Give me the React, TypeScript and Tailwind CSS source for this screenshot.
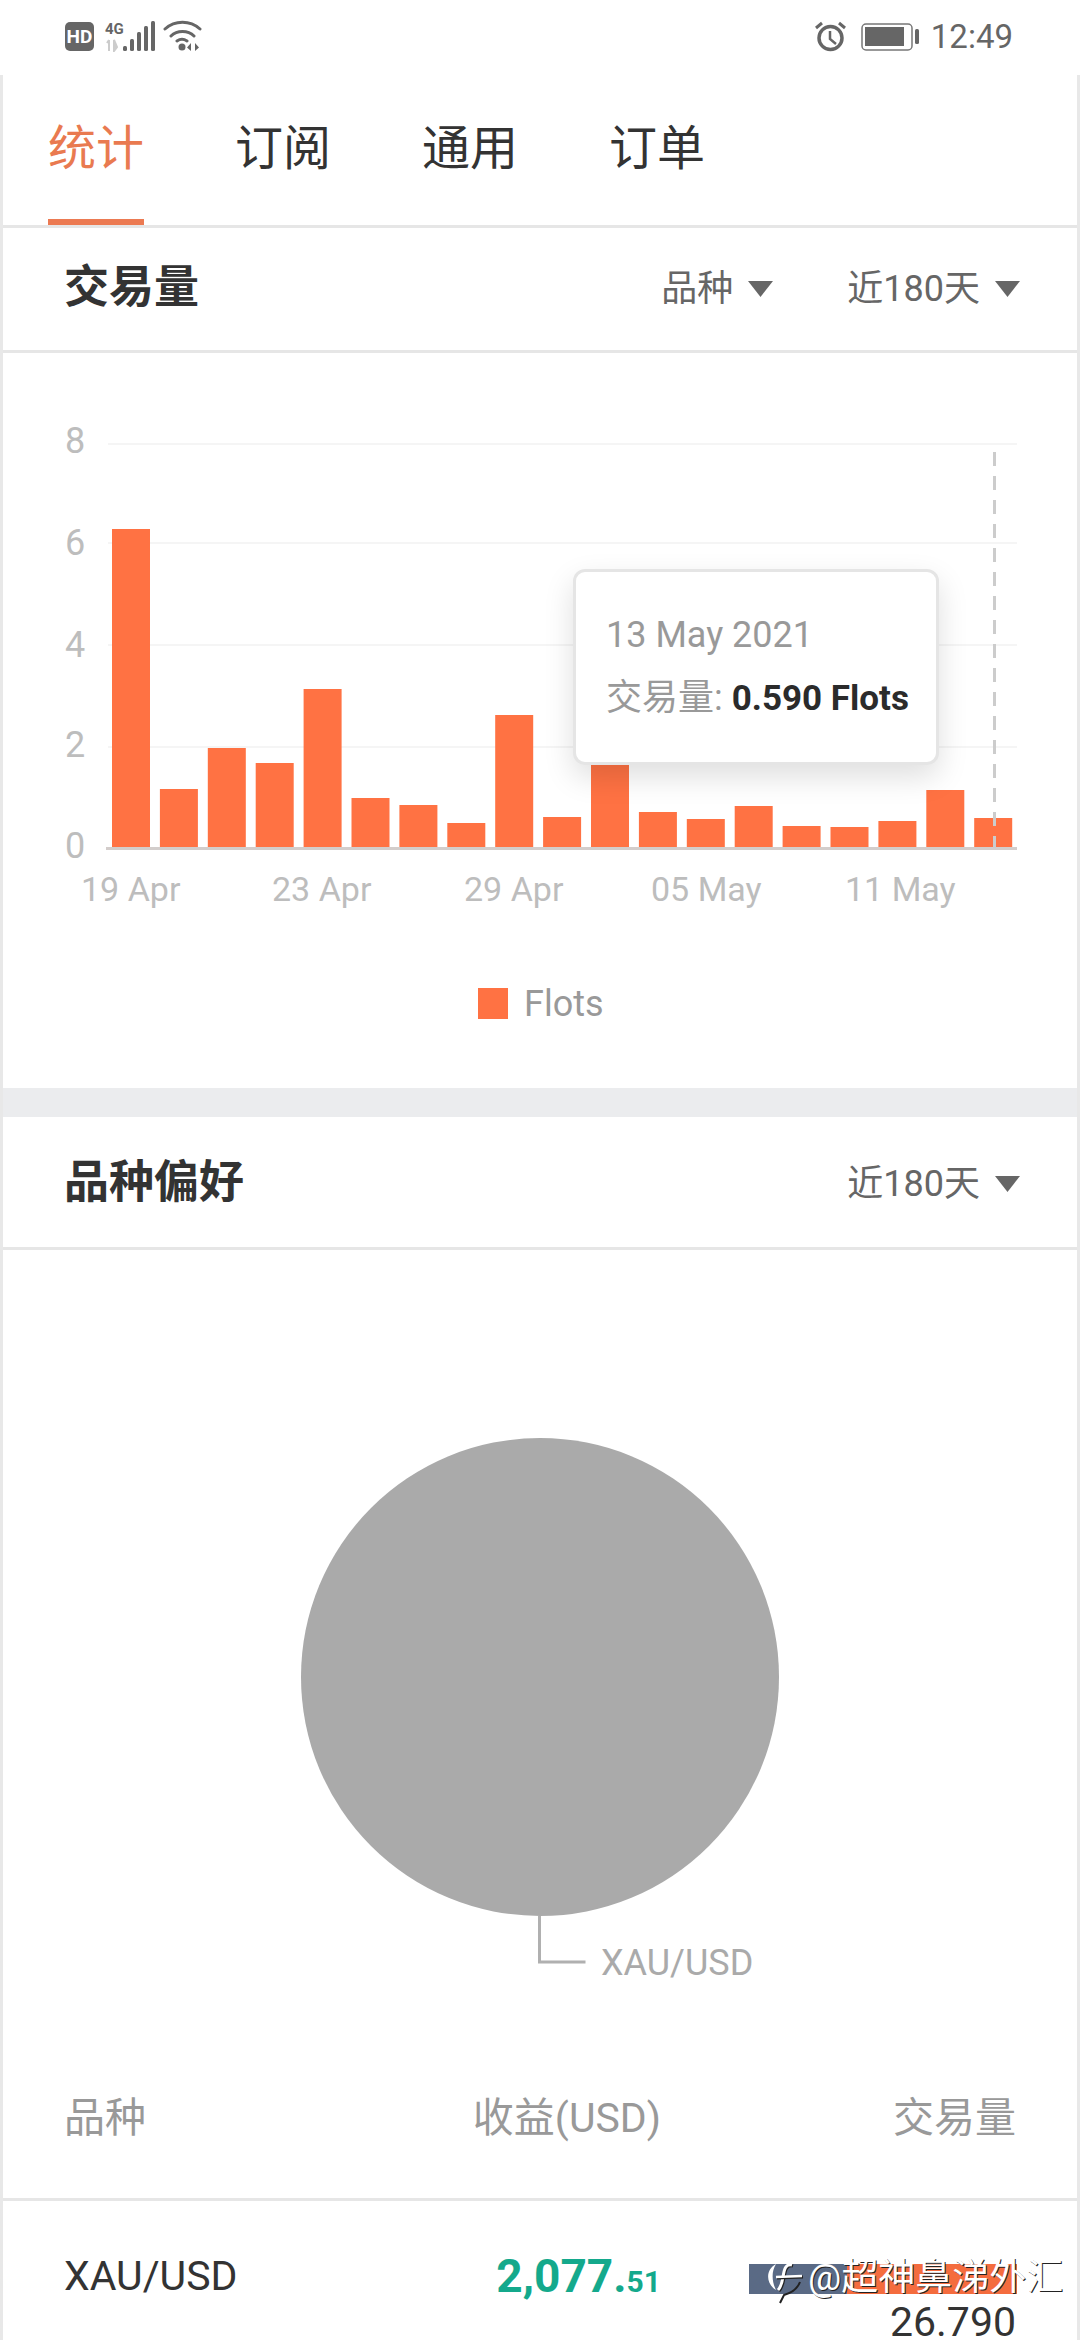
const barTops = [529, 789, 748, 763, 689, 798, 805, 823, 715, 817, 740, 812, 819, 806, 826, 827, 821, 790, 818];
const gridLines = [444, 543, 645, 747];
const yLabels = [
  { label: "8", y: 453 },
  { label: "6", y: 555 },
  { label: "4", y: 657 },
  { label: "2", y: 757 },
  { label: "0", y: 858 },
];
const xLabels = [
  { label: "19 Apr", x: 81 },
  { label: "23 Apr", x: 272 },
  { label: "29 Apr", x: 464 },
  { label: "05 May", x: 651 },
  { label: "11 May", x: 845 },
];

const Caret = () => (
  <svg width="25" height="16" viewBox="0 0 25 16" className="shrink-0">
    <polygon points="0,0 25,0 12.5,16" fill="#666666" />
  </svg>
);

const Filter = ({ label }: { label: string }) => (
  <div className="flex items-center gap-[15px]">
    <span className="text-[36px] leading-none text-[#666]">{label}</span>
    <Caret />
  </div>
);

const StatusLeft = () => (
  <svg width="137" height="32" viewBox="65 21 137 32">
    <rect x="65" y="23" width="29" height="29" rx="5" fill="#666" />
    <text x="79.500" y="44" textAnchor="middle" fontSize="19" fontWeight="700" fill="#fff">
      HD
    </text>
    <text x="105" y="35" fontSize="15" fontWeight="700" fill="#666">
      4G
    </text>
    <path d="M109 41v11M107 44l2-3M114 41v11l3-4z" stroke="#ccc" strokeWidth="2" fill="#ccc" />
    <rect x="123" y="47" width="4" height="5" rx="1.500" fill="#666" />
    <rect x="130" y="40" width="4" height="12" rx="1.500" fill="#666" />
    <rect x="137" y="33" width="4" height="19" rx="1.500" fill="#666" />
    <rect x="144" y="27" width="4" height="25" rx="1.500" fill="#666" />
    <rect x="151" y="22" width="4" height="30" rx="1.500" fill="#666" />
    <path d="M165 30c10-9 25-9 35 0M171 37c6-6 17-6 23 0M177 42c3-2 7-2 10 0" stroke="#666" strokeWidth="3" fill="none" strokeLinecap="round" />
    <circle cx="182" cy="48" r="3.500" fill="#666" />
    <path d="M191 44v8l-4-3.500zM195 44v8l4-3.500z" fill="#666" />
  </svg>
);

const StatusRight = () => (
  <div className="flex items-center">
    <svg width="107" height="32" viewBox="816 21 107 32">
      <circle cx="833.500" cy="39" r="11.500" stroke="#666" strokeWidth="3.500" fill="none" />
      <path d="M833 32v8l6 5" stroke="#666" strokeWidth="2.500" fill="none" />
      <path d="M819 29l6-5M848 29l-6-5" stroke="#666" strokeWidth="3" fill="none" />
      <rect x="865" y="25" width="50" height="26" rx="4" stroke="#777" strokeWidth="1.500" fill="none" />
      <rect x="868" y="28" width="39" height="19" fill="#666" />
      <rect x="918" y="30" width="4" height="15" rx="1.500" fill="#666" />
    </svg>
    <span className="ml-[11px] text-[33px] leading-none text-[#666]">12:49</span>
  </div>
);

const VolumeChart = () => (
  <svg width="1074" height="735" viewBox="3 353 1074 735" className="block">
    {gridLines.map((y) => (
      <rect key={y} x="108" y={y - 1} width="909" height="2" fill="#f5f5f5" />
    ))}
    {barTops.map((top, i) => (
      <rect key={i} x={112 + i * 47.9} y={top} width="38" height={848 - top} fill="#ff7243" />
    ))}
    <rect x="106" y="847" width="911" height="3" fill="#d3cdcb" />
    <line x1="994.500" y1="452" x2="994.500" y2="848" stroke="#cccccc" strokeWidth="3" strokeDasharray="14 10" />
    {yLabels.map((t) => (
      <text key={t.label} x="65" y={t.y} fontSize="36" fill="#bdbdbd">
        {t.label}
      </text>
    ))}
    {xLabels.map((t) => (
      <text key={t.label} x={t.x} y="901" fontSize="34" fill="#bdbdbd">
        {t.label}
      </text>
    ))}
    <rect x="478" y="988" width="30" height="31" fill="#ff7243" />
    <text x="524" y="1016" fontSize="36" fill="#999">
      Flots
    </text>
  </svg>
);

const PieChart = () => (
  <svg width="1074" height="790" viewBox="3 1250 1074 790" className="block">
    <circle cx="540" cy="1677" r="239" fill="#aaaaaa" />
    <path d="M539.500 1916v46h46" stroke="#b0b0b0" strokeWidth="3" fill="none" />
    <text x="601" y="1975" fontSize="36" fill="#aaaaaa">
      XAU/USD
    </text>
  </svg>
);

const Watermark = () => (
  <div className="absolute left-[749px] top-[2245px] h-[70px] w-[325px]">
    <div className="absolute left-0 top-[19px] flex h-[30px] w-[268px]">
      <div className="w-[98px] bg-[#5a6a85]" />
      <div className="w-[170px] bg-[#f46c3e]" />
    </div>
    <svg width="40" height="46" viewBox="0 0 40 46" className="absolute left-[18px] top-[15px]">
      <path d="M33 22C30 30 24 33 17 35L13 43" stroke="#222" strokeWidth="2" fill="none" />
      <path d="M9 4C-2 10 -1 24 9 30C5 22 4 12 9 4Z" fill="#fff" />
      <path d="M26 6C19 4 18 12 17 18C16 24 15 28 12 31" stroke="#222" strokeWidth="3" fill="none" />
      <path d="M25 5C18 3 17 11 16 17C15 23 14 27 11 30" stroke="#fff" strokeWidth="3" fill="none" />
      <path d="M10 18L36 17" stroke="#222" strokeWidth="3" fill="none" />
      <path d="M9 17L35 16" stroke="#fff" strokeWidth="2.500" fill="none" />
    </svg>
    <span className="absolute left-[59px] top-[8px] whitespace-nowrap text-[37px] leading-[50px] text-white [text-shadow:1px_1px_0_#222]">
      @超神鼻涕外汇
    </span>
  </div>
);

const App = () => {
  return (
    <div className="relative h-[2340px] w-[1080px] overflow-hidden bg-white font-['Roboto','Noto_Sans_CJK_SC',sans-serif]">
      <div className="flex h-[75px] items-center justify-between pb-[3px] pl-[65px] pr-[67px]">
        <StatusLeft />
        <StatusRight />
      </div>

      <div className="h-[2265px] border-x-[3px] border-[#e8e8e8]">
        <nav className="flex h-[153px] gap-[91px] border-b-[3px] border-[#e6e6e6] pl-[45px]">
          <div className="flex items-center border-b-[6px] border-[#ec7a52] pt-[4px] text-[48px] text-[#e97a50]">统计</div>
          <div className="flex items-center border-b-[6px] border-transparent pt-[4px] text-[48px] text-[#333]">订阅</div>
          <div className="flex items-center border-b-[6px] border-transparent pt-[4px] text-[48px] text-[#333]">通用</div>
          <div className="flex items-center border-b-[6px] border-transparent pt-[4px] text-[48px] text-[#333]">订单</div>
        </nav>

        <section className="flex h-[125px] items-center justify-between border-b-[3px] border-[#e6e6e6] pl-[61px] pr-[57px]">
          <h2 className="pb-[4px] text-[45px] font-bold leading-none text-[#333]">交易量</h2>
          <div className="flex items-center gap-[74px]">
            <Filter label="品种" />
            <Filter label="近180天" />
          </div>
        </section>

        <VolumeChart />

        <div className="h-[29px] bg-[#ebecee]" />

        <section className="flex h-[133px] items-center justify-between border-b-[3px] border-[#e6e6e6] pl-[61px] pr-[57px]">
          <h2 className="text-[45px] font-bold leading-none text-[#333]">品种偏好</h2>
          <div className="pt-[4px]">
            <Filter label="近180天" />
          </div>
        </section>

        <PieChart />

        <div className="grid h-[161px] grid-cols-[407px_190px_1fr] items-center border-b-[3px] border-[#e6e6e6] px-[61px] text-[41px] text-[#999]">
          <span>品种</span>
          <span className="whitespace-nowrap text-right">收益(USD)</span>
          <span className="text-right">交易量</span>
        </div>

        <div className="grid grid-cols-[407px_190px_1fr] px-[61px] pt-[50px]">
          <span className="text-[41px] leading-[50px] text-[#333]">XAU/USD</span>
          <span className="whitespace-nowrap text-right leading-[50px] text-[#14a98c]">
            <b className="text-[46px] font-bold">2,077.</b>
            <b className="text-[30px] font-bold">51</b>
          </span>
          <span className="pt-[46px] text-right text-[41px] leading-[50px] text-[#333]">26.790</span>
        </div>
      </div>

      <div className="absolute left-[573px] top-[569px] flex h-[196px] w-[366px] flex-col justify-center gap-[19px] rounded-[12px] border-[3px] border-[#e5e5e5] bg-white pl-[30px] shadow-[0_12px_30px_rgba(0,0,0,0.13)]">
        <span className="text-[36px] leading-[44px] text-[#999]">13 May 2021</span>
        <span className="whitespace-nowrap text-[36px] leading-[44px] text-[#999]">
          交易量: <b className="text-[35px] font-bold text-[#2b2b2b]">0.590 Flots</b>
        </span>
      </div>

      <Watermark />
    </div>
  );
};

export default App;
